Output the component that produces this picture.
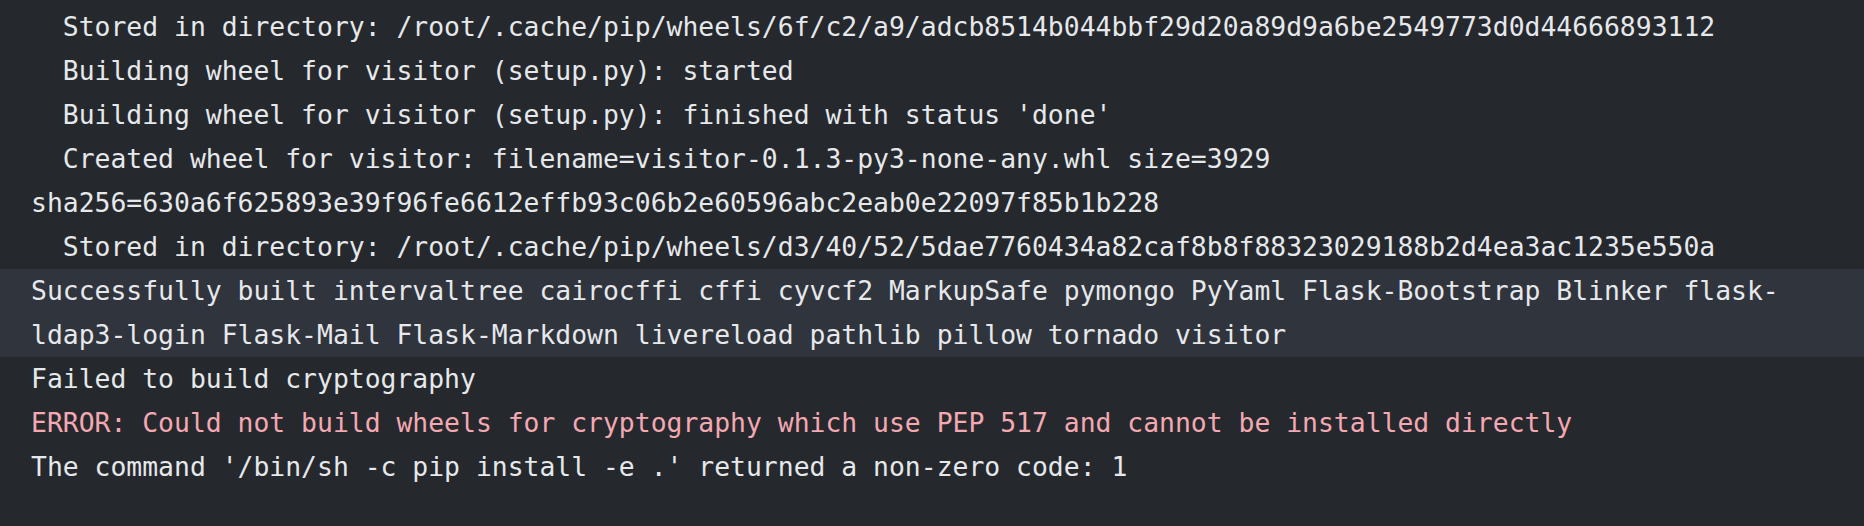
type Line = { text: string; tone?: "error"; marked?: boolean }

const lines: Line[] = [
  { text: "  Stored in directory: /root/.cache/pip/wheels/6f/c2/a9/adcb8514b044bbf29d20a89d9a6be2549773d0d44666893112" },
  { text: "  Building wheel for visitor (setup.py): started" },
  { text: "  Building wheel for visitor (setup.py): finished with status 'done'" },
  { text: "  Created wheel for visitor: filename=visitor-0.1.3-py3-none-any.whl size=3929" },
  { text: "sha256=630a6f625893e39f96fe6612effb93c06b2e60596abc2eab0e22097f85b1b228" },
  { text: "  Stored in directory: /root/.cache/pip/wheels/d3/40/52/5dae7760434a82caf8b8f88323029188b2d4ea3ac1235e550a" },
  {
    text: "Successfully built intervaltree cairocffi cffi cyvcf2 MarkupSafe pymongo PyYaml Flask-Bootstrap Blinker flask-",
    marked: true,
  },
  { text: "ldap3-login Flask-Mail Flask-Markdown livereload pathlib pillow tornado visitor", marked: true },
  { text: "Failed to build cryptography" },
  { text: "ERROR: Could not build wheels for cryptography which use PEP 517 and cannot be installed directly", tone: "error" },
  { text: "The command '/bin/sh -c pip install -e .' returned a non-zero code: 1" },
]

// terminal log output, one row per line
export default function App() {
  return (
    <div className="w-[1864px] h-[526px] bg-[#25282d] pt-[5px] font-['DejaVu_Sans_Mono',monospace] text-[26.4px] leading-[44px] overflow-hidden">
      {lines.map((line, i) => (
        <div
          key={i}
          className={`h-[44px] pl-[31px] whitespace-pre ${line.marked ? "bg-[#30343c]" : ""} ${
            line.tone === "error" ? "text-[#f4a8b2]" : "text-[#e6e8eb]"
          }`}
        >
          {line.text}
        </div>
      ))}
    </div>
  )
}
